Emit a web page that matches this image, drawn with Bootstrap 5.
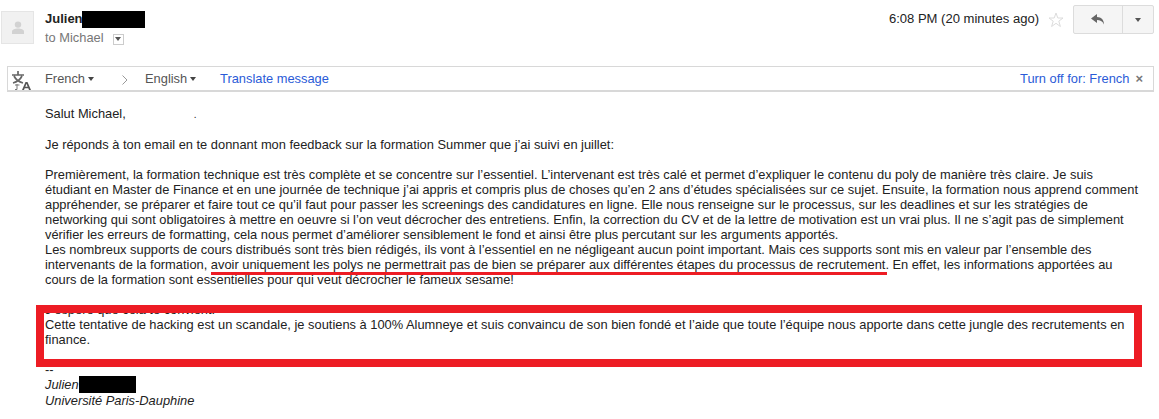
<!DOCTYPE html>
<html lang="fr"><head><meta charset="utf-8"><title>Mail</title>
<link rel="stylesheet" href="https://cdn.jsdelivr.net/npm/bootstrap@5.3.0/dist/css/bootstrap.min.css">
<style>
html,body{height:419px;overflow:hidden;background:#fff}
body{font-family:"Liberation Sans",Arial,sans-serif;font-size:12.87px;line-height:15px;color:#222;position:relative}
.mail-head{height:66px;padding:11px 5px 0 1px}
.avatar{width:33px;height:33px;background:#f1f1f1;border:1px solid #e5e5e5;margin-right:11px}
.sender{font-weight:700;font-size:13px;line-height:16px;height:17px}
.redact{display:inline-block;background:#000;vertical-align:top}
.r1{width:63px;height:17px;margin-left:-1px}
.to{color:#777;font-size:12.87px;line-height:16px;margin-top:2px}
.caret-box{width:11px;height:11px;border:1px solid #ccc;margin-left:9px;position:relative;top:1px}
.tri{width:0;height:0;border-left:3.5px solid transparent;border-right:3.5px solid transparent;border-top:4px solid #555;display:inline-block}
.stamp{font-size:13.05px;color:#222;line-height:16px;margin:0 9px 0 0}
.star{margin:1px 9px 0 0}
.reply-group{width:81px;height:29px;margin-top:-6px;border:1px solid #dcdcdc;border-radius:2px;background:#f5f5f5}
.reply-main{width:49px;border-right:1px solid #dcdcdc}
.reply-more{flex:1}
.bar{height:26px;margin:0 5px 0 7px;border:1px solid #d8d8d8;border-bottom-width:2px;padding:1px 0 0 37px;font-size:12.87px;line-height:24px;color:#666;position:relative}
.bar-icon{position:absolute;left:3px;top:3px}
.lang{color:#555}
.lang-a{width:77px}.lang-b{width:23px}.lang-c{width:75px}
.lang .tri{margin-left:3px;position:relative;top:-2px;border-top-color:#444}
.blue{color:#2a5bd7}
.x-mark{color:#777;font-weight:700;margin:0 10px 0 6px;font-size:13px}
.msg{padding:14px 0 0 45px;white-space:nowrap;color:#222}
.speck{margin-left:68px;font-size:10px}
.under-mark{position:absolute;left:211px;top:272px;width:676px;height:3px;background:#ed1c24}
.red-box{position:absolute;left:36px;top:305px;width:1106px;height:62px;border:8px solid #ed1c24}
.sig{font-style:italic}
.r3{width:57px;height:17px;margin-top:-1px}
</style></head><body>
<div class="mail-head d-flex">
 <div class="avatar d-flex align-items-center justify-content-center flex-shrink-0">
  <svg width="14" height="14" viewBox="0 0 14 14"><circle cx="7" cy="3.6" r="3.2" fill="#d2d2d2"/><path d="M1 13v-2.5C1 8.5 4 7.5 7 7.5s6 1 6 3V13z" fill="#d2d2d2"/></svg>
 </div>
 <div class="flex-grow-1">
  <div class="sender">Julien<span class="redact r1"></span></div>
  <div class="to d-flex align-items-center">to Michael<span class="caret-box d-flex align-items-center justify-content-center"><span class="tri"></span></span></div>
 </div>
 <div class="stamp">6:08 PM (20 minutes ago)</div>
 <svg class="star" width="16" height="16" viewBox="0 0 16 16"><path d="M8 1l1.800 5h5.200l-4.200 3.200 1.600 5.300L8 11.300l-4.400 3.200 1.600-5.300L1 6h5.200z" fill="none" stroke="#dcdcdc"/></svg>
 <div class="reply-group d-flex">
  <div class="reply-main d-flex align-items-center justify-content-center">
   <svg width="14" height="11" viewBox="0 0 14 11"><path d="M6 0L0 4.500 6 9V6c3 0 5.500 1 7 4.500C13 6 10.500 3 6 3z" fill="#666"/></svg>
  </div>
  <div class="reply-more d-flex align-items-center justify-content-center"><span class="tri"></span></div>
 </div>
</div>
<div class="bar d-flex align-items-center">
 <svg class="bar-icon" width="21" height="21" viewBox="0 0 21 21"><path d="M1 5h12M7 1v4M3 6c1.500 3 5 6 9 7M11 6c-1.500 3-5 6-9 7" fill="none" stroke="#666" stroke-width="1.700"/><path d="M11 20l3.500-8h2l3.500 8h-2l-.7-1.800h-3.600L13 20zM14.300 16.700h2.400l-1.200-3z" fill="#555"/><path d="M6 14v5.500M8.500 15H4M4 19.500l2 0" fill="none" stroke="#777"/></svg>
 <span class="lang lang-a">French<span class="tri"></span></span>
 <span class="lang-b"><svg width="6" height="10" viewBox="0 0 6 10"><path d="M.5.500L5 5 .5 9.500" fill="none" stroke="#999"/></svg></span>
 <span class="lang lang-c">English<span class="tri"></span></span>
 <span class="blue">Translate message</span>
 <span class="blue ms-auto">Turn off for: French</span><span class="x-mark">×</span>
</div>
<div class="msg">
Salut Michael,<span class="speck">.</span><br><br>
Je réponds à ton email en te donnant mon feedback sur la formation Summer que j’ai suivi en juillet:<br><br>
Premièrement, la formation technique est très complète et se concentre sur l’essentiel. L’intervenant est très calé et permet d’expliquer le contenu du poly de manière très claire. Je suis<br>
étudiant en Master de Finance et en une journée de technique j’ai appris et compris plus de choses qu’en 2 ans d’études spécialisées sur ce sujet. Ensuite, la formation nous apprend comment<br>
appréhender, se préparer et faire tout ce qu’il faut pour passer les screenings des candidatures en ligne. Elle nous renseigne sur le processus, sur les deadlines et sur les stratégies de<br>
networking qui sont obligatoires à mettre en oeuvre si l’on veut décrocher des entretiens. Enfin, la correction du CV et de la lettre de motivation est un vrai plus. Il ne s’agit pas de simplement<br>
vérifier les erreurs de formatting, cela nous permet d’améliorer sensiblement le fond et ainsi être plus percutant sur les arguments apportés.<br>
Les nombreux supports de cours distribués sont très bien rédigés, ils vont à l’essentiel en ne négligeant aucun point important. Mais ces supports sont mis en valeur par l’ensemble des<br>
intervenants de la formation, avoir uniquement les polys ne permettrait pas de bien se préparer aux différentes étapes du processus de recrutement. En effet, les informations apportées au<br>
cours de la formation sont essentielles pour qui veut décrocher le fameux sesame!<br><br>
J’espère que cela te convient.<br>
Cette tentative de hacking est un scandale, je soutiens à 100% Alumneye et suis convaincu de son bien fondé et l’aide que toute l’équipe nous apporte dans cette jungle des recrutements en<br>
finance.<br><br>
--<br>
<span class="sig">Julien<span class="redact r3"></span><br>Université Paris-Dauphine</span>
</div>
<div class="under-mark"></div>
<div class="red-box"></div>
</body></html>
